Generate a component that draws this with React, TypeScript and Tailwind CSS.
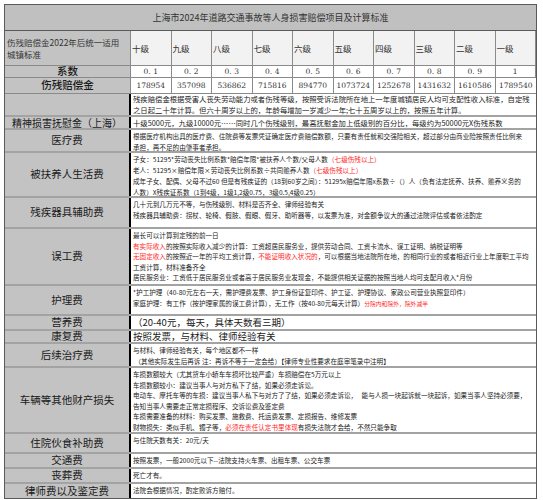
import type { ReactNode } from 'react'

const LEVELS = ['十级', '九级', '八级', '七级', '六级', '五级', '四级', '三级', '二级', '一级']
const COEF = ['0. 1', '0. 2', '0. 3', '0. 4', '0. 5', '0. 6', '0. 7', '0. 8', '0. 9', '1']
const AMOUNTS = ['178954', '357098', '536862', '715816', '894770', '1073724', '1252678', '1431632', '1610586', '1789540']

const cjk = { fontFamily: '"Noto Sans CJK SC", "Noto Sans", sans-serif' }
const serif = { fontFamily: '"DejaVu Serif", "Noto Sans CJK SC", serif' }

function Red({ children }: { children: ReactNode }) {
    return <span className="text-[#ff1f1f]">{children}</span>
}

function Row({ label, h, children, big, tight }: { label?: string; h: string; children?: ReactNode; big?: boolean; tight?: boolean }) {
    const text = big
        ? 'flex items-center text-[9.5px] leading-none'
        : tight ? 'pt-[1px] text-[6.6px] leading-[10.5px]' : 'pt-[1px] text-[6.6px] leading-[11px]'
    return (
        <div className={`flex ${h} border-b-2 border-[#a3a3a3]`}>
            <div className="flex w-[126px] shrink-0 items-center justify-center border-r-2 border-black bg-[#c3c3c3] text-[10.5px] leading-none text-[#1a1a1a]">
                {label}
            </div>
            <div className={`flex-1 whitespace-nowrap bg-white pl-[2px] text-[#222] ${text}`}>
                {children}
            </div>
        </div>
    )
}

export default function App() {
    return (
        <div className="bg-white pl-[4px] pt-[4px]" style={cjk}>
            <div className="w-[533px] border border-[#5a5a5a]">

                {/* 标题 */}
                <div className="flex h-[26px] items-center justify-center border-b border-[#5a5a5a] bg-[#c0c0c0] text-[9px] text-[#333]">
                    上海市2024年道路交通事故等人身损害赔偿项目及计算标准
                </div>

                {/* 等级表 */}
                <div className="grid grid-cols-[126px_repeat(10,minmax(0,1fr))] text-[#333]">
                    <div className="flex h-[35px] flex-col justify-center border-r border-b border-[#8a8a8a] bg-[#c3c3c3] px-[2px] text-[8.5px] leading-[12px] text-[#333]">
                        <div>伤残赔偿金2022年后统一适用</div>
                        <div>城镇标准</div>
                    </div>
                    {LEVELS.map(l => (
                        <div key={l} className="flex h-[35px] items-center border-r border-b border-[#8a8a8a] bg-[#f2f2f2] pl-[1px] text-[8.5px] last:border-r-0">
                            {l}
                        </div>
                    ))}

                    <div className="flex h-[12px] items-center justify-center border-r border-b border-[#8a8a8a] bg-[#c3c3c3] text-[10.5px] leading-none font-medium text-[#1a1a1a]">
                        系数
                    </div>
                    {COEF.map(c => (
                        <div key={c} className="flex h-[12px] items-center justify-center border-r border-b border-[#8a8a8a] bg-white text-[7.5px] leading-none last:border-r-0" style={serif}>
                            {c}
                        </div>
                    ))}

                    <div className="flex h-[16px] items-center justify-center border-r border-b border-[#8a8a8a] bg-[#c3c3c3] text-[10.5px] leading-none font-medium text-[#1a1a1a]">
                        伤残赔偿金
                    </div>
                    {AMOUNTS.map(a => (
                        <div key={a} className="flex h-[16px] items-center justify-center border-r border-b border-[#8a8a8a] bg-white text-[7.5px] leading-none last:border-r-0" style={serif}>
                            {a}
                        </div>
                    ))}
                </div>

                <div className="flex h-[23px] border-b-2 border-[#a3a3a3]">
                    <div className="w-[126px] shrink-0 border-r-2 border-black bg-[#c3c3c3]" />
                    <div className="flex-1 whitespace-nowrap bg-white pl-[2px] text-[7.35px] leading-[10.5px] text-[#222]">
                        <div>残疾赔偿金根据受害人丧失劳动能力或者伤残等级，按照受诉法院所在地上一年度城镇居民人均可支配性收入标准，自定残</div>
                        <div>之日起二十年计算。但六十周岁以上的，年龄每增加一岁减少一年;七十五周岁以上的，按照五年计算。</div>
                    </div>
                </div>

                <div className="flex h-[13px] border-b-2 border-[#a3a3a3]">
                    <div className="flex w-[126px] shrink-0 items-center justify-center border-r-2 border-black bg-[#c3c3c3] text-[10px] leading-none text-[#1a1a1a]">
                        精神损害抚慰金（上海）
                    </div>
                    <div className="flex flex-1 items-center whitespace-nowrap bg-white pl-[2px] text-[7.35px] text-[#222]">
                        十级5000元，九级10000元……同时几个伤残级别，最高抚慰金加上低级别的百分比，每级约为50000元X伤残系数
                    </div>
                </div>

                <Row label="医疗费" h="h-[23px]" tight>
                    <div>根据医疗机构出具的医疗费、住院费等发票凭证确定医疗费赔偿数额，只要有责任就和交强险相关，超过部分由商业险按照责任比例来</div>
                    <div>承担，再不足的由肇事者承担。</div>
                </Row>

                <Row label="被扶养人生活费" h="h-[45px]">
                    <div>子女：51295*劳动丧失比例系数*赔偿年限*被扶养人个数/父母人数<Red>（七级伤残以上）</Red></div>
                    <div>老人：51295×赔偿年限×劳动丧失比例系数÷共同赡养人数<Red>（七级伤残以上）</Red></div>
                    <div>成年子女、配偶、父母不过60 但是有残疾证的（18到60岁之间）：51295x赔偿年限x系数÷（）人（负有法定抚养、扶养、赡养义务的</div>
                    <div>人数）X残疾证系数（1到4级，1级1,2级0.75，3级0.5,4级0.25）</div>
                </Row>

                <Row label="残疾器具辅助费" h="h-[31px]">
                    <div>几十元到几万元不等，与伤残级别、材料是否齐全、律师经验有关</div>
                    <div>残疾器具辅助费：拐杖、轮椅、假肢、假眼、假牙、助听器等，以发票为准，对金额争议大的通过法院评估或者依法酌定</div>
                </Row>

                <Row label="误工费" h="h-[57px]" tight>
                    <div>最长可以计算到定残的前一日</div>
                    <div><Red>有实际收入</Red>的按照实际收入减少的计算：工资超居民服务业，提供劳动合同、工资卡流水、误工证明、纳税证明等</div>
                    <div><Red>无固定收入</Red>的按照近一年的平均工资计算，<Red>不能证明收入状况的</Red>，可以根据当地法院所在地，的相同行业的或者相近行业上年度职工平均</div>
                    <div>工资计算，材料准备齐全</div>
                    <div>居民服务业：工资低于居民服务业或者高于居民服务业发现金，不能提供相关证据的按照当地人均可支配月收入*月份</div>
                </Row>

                <Row label="护理费" h="h-[30px]">
                    <div>*护工护理（40-80元左右一天，需护理费发票、护工身份证复印件、护工证、护理协议、家政公司营业执照复印件）</div>
                    <div>家庭护理：有工作（按护理家属的误工费计算），无工作（按40-80元每天计算）<span className="text-[5.8px] text-[#ff1f1f]">分院内和院外，院外减半</span></div>
                </Row>

                <Row label="营养费" h="h-[15px]" big>
                    <div>（20-40元，每天，具体天数看三期）</div>
                </Row>

                <Row label="康复费" h="h-[13px]" big>
                    <div>按照发票，与材料、律师经验有关</div>
                </Row>

                <Row label="后续治疗费" h="h-[24px]" tight>
                    <div>与材料、律师经验有关，每个地区都不一样</div>
                    <div>&nbsp;（其他实际发生后再诉 注：再诉不等于一定会给）【律师专业性要求在庭审笔录中注明】</div>
                </Row>

                <Row label="车辆等其他财产损失" h="h-[66px]" tight>
                    <div>车损数额较大（尤其货车小轿车车损坏比较严重）车损赔偿在5万元以上</div>
                    <div>车损数额较小：建议当事人与对方私下了结，如果必须走诉讼。</div>
                    <div>电动车、摩托车等的车损：建议当事人私下与对方了了结，如果必须走诉讼，&nbsp;&nbsp;&nbsp;能与人损一块起诉就一块起诉，如果当事人坚持必须要，</div>
                    <div>告知当事人需要走正常定损程序、交诉讼费及鉴定费</div>
                    <div>车损需要准备的材料：购买发票、施救费、托运费发票、定损报告、维修发票</div>
                    <div>财物损失：类似手机、镯子等，<Red>必须在责任认定书里体现</Red>有损失法院才会给，不然只能争取</div>
                </Row>

                <Row label="住院伙食补助费" h="h-[20px]">
                    <div>与住院天数有关：20元/天</div>
                </Row>

                <Row label="交通费" h="h-[15px]">
                    <div>按照发票，一般2000元以下--法院支持火车票、出租车票、公交车票</div>
                </Row>

                <Row label="丧葬费" h="h-[15px]">
                    <div>死亡才有。</div>
                </Row>

                <div className="flex h-[14px]">
                    <div className="flex w-[126px] shrink-0 items-center justify-center border-r-2 border-black bg-[#c3c3c3] text-[10.5px] leading-none text-[#1a1a1a]">
                        律师费以及鉴定费
                    </div>
                    <div className="flex-1 whitespace-nowrap bg-white pl-[2px] pt-[1px] text-[6.6px] leading-[11px] text-[#222]">
                        法院会根据情况，酌定败诉方赔付。
                    </div>
                </div>
            </div>
        </div>
    )
}
